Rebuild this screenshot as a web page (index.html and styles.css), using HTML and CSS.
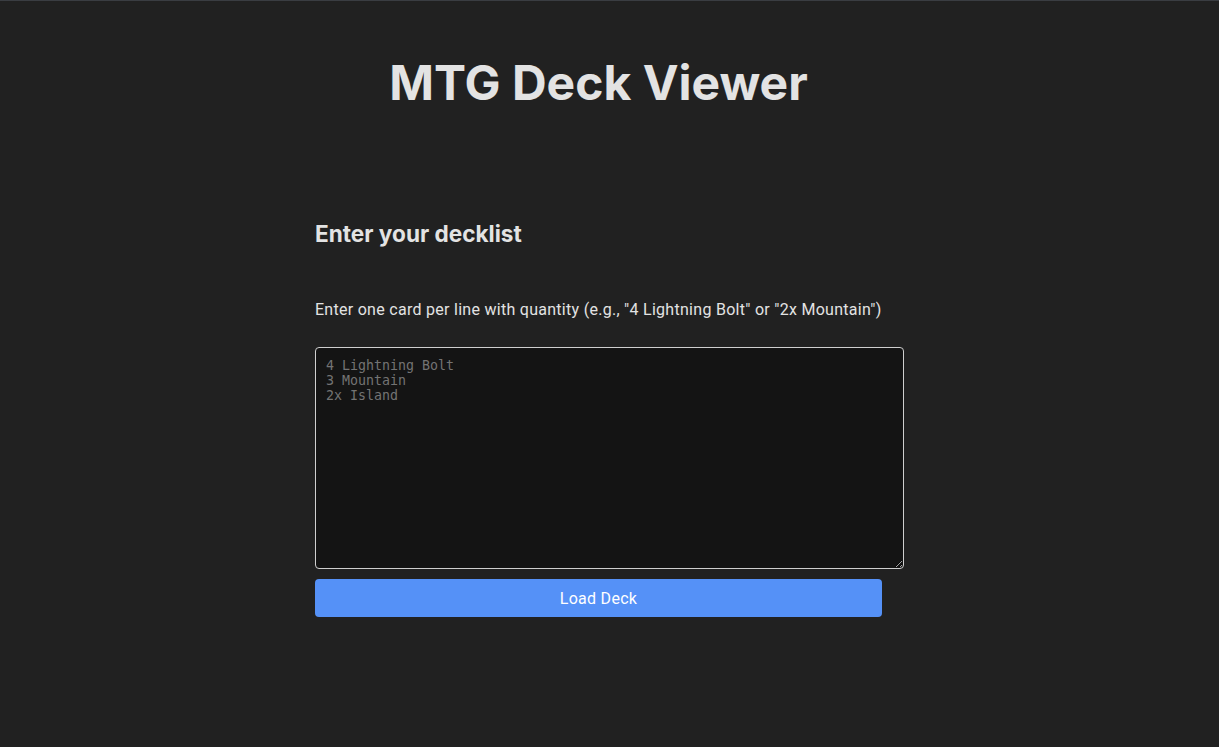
FILE: index.html
```html
<!DOCTYPE html>
<html lang="en">
<head>
<meta charset="utf-8">
<title>MTG Deck Viewer</title>
<link rel="stylesheet" href="styles.css">
</head>
<body>
<div class="page">
  <h1 class="title">MTG Deck Viewer</h1>
  <section class="deck-form">
    <h2 class="form-heading">Enter your decklist</h2>
    <p class="hint">Enter one card per line with quantity (e.g., "4 Lightning Bolt" or "2x Mountain")</p>
    <textarea class="decklist" placeholder="4 Lightning Bolt&#10;3 Mountain&#10;2x Island"></textarea>
    <button class="load-btn" type="button">Load Deck</button>
  </section>
</div>
</body>
</html>
```

FILE: styles.css
```css
html, body {
  margin: 0;
  padding: 0;
  background: #212121;
}
body {
  border-top: 1px solid #3a3d42;
  color: #e3e3e3;
  font-family: Inter, "Noto Sans", sans-serif;
  min-height: 746px;
}
.page {
  width: 1197px;
  padding-top: 50px;
}
.title {
  margin: 0;
  text-align: center;
  font-size: 48px;
  font-weight: 700;
  line-height: 64px;
  color: #e3e3e3;
}
.deck-form {
  width: 567px;
  margin: 104px auto 0;
}
.form-heading {
  margin: 0;
  font-size: 22.6px;
  font-weight: 700;
  line-height: 30px;
  color: #e3e3e3;
}
.hint {
  margin: 49px 0 0;
  font-family: Roboto, sans-serif;
  font-size: 16px;
  letter-spacing: 0.28px;
  line-height: 24px;
  color: #e3e3e3;
}
.decklist {
  display: block;
  box-sizing: content-box;
  width: 100%;
  height: 200px;
  margin: 25px 0 0;
  padding: 10px;
  border: 1px solid #cfcfcf;
  border-radius: 4px;
  background: #141414;
  color: #e3e3e3;
  font-family: "DejaVu Sans Mono", monospace;
  font-size: 13.3px;
  line-height: 15px;
}
.decklist::placeholder {
  color: #737373;
}
.load-btn {
  display: block;
  width: 100%;
  height: 38px;
  margin-top: 10px;
  border: none;
  border-radius: 4px;
  background: #5591f7;
  color: #ffffff;
  font-family: Roboto, sans-serif;
  font-size: 16px;
  letter-spacing: 0.28px;
}
```
